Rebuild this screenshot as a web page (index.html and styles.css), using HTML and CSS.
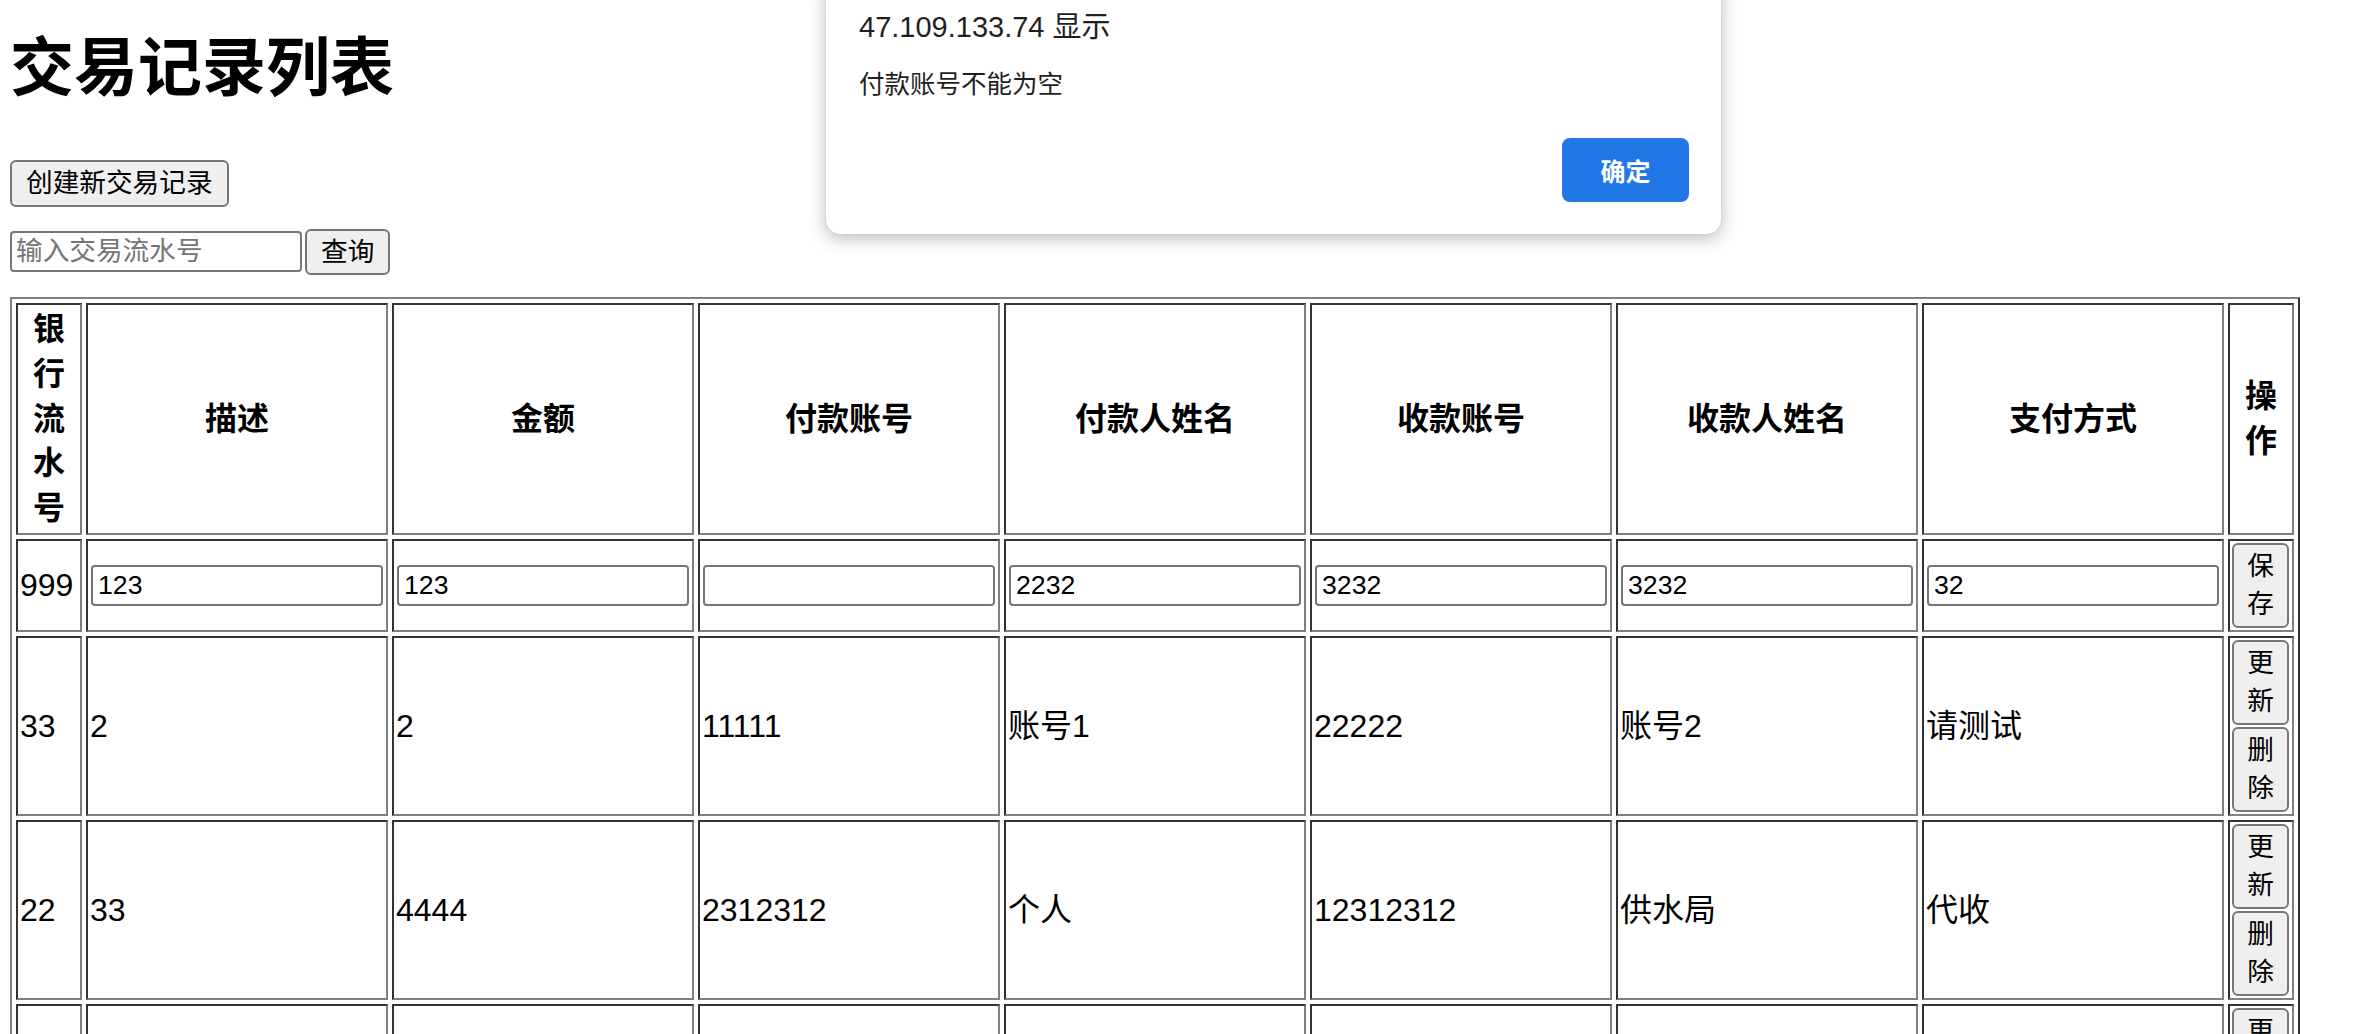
FILE: index.html
```html
<!DOCTYPE html>
<html lang="zh-CN">
<head>
<meta charset="utf-8">
<title>交易记录列表</title>
<link rel="stylesheet" href="styles.css">
</head>
<body>
<div class="page">
  <h1 class="title">交易记录列表</h1>
  <button class="btn btn-create">创建新交易记录</button>
  <div class="search">
    <input class="search-input" type="text" placeholder="输入交易流水号">
    <button class="btn btn-search">查询</button>
  </div>
  <table class="records">
    <thead>
      <tr>
        <th class="c-narrow">银行流水号</th>
        <th class="c-wide">描述</th>
        <th class="c-wide">金额</th>
        <th class="c-wide">付款账号</th>
        <th class="c-wide">付款人姓名</th>
        <th class="c-wide">收款账号</th>
        <th class="c-wide">收款人姓名</th>
        <th class="c-wide">支付方式</th>
        <th class="c-narrow">操作</th>
      </tr>
    </thead>
    <tbody>
      <tr>
        <td>999</td>
        <td><input class="cell-input" type="text" value="123"></td>
        <td><input class="cell-input" type="text" value="123"></td>
        <td><input class="cell-input" type="text" value=""></td>
        <td><input class="cell-input" type="text" value="2232"></td>
        <td><input class="cell-input" type="text" value="3232"></td>
        <td><input class="cell-input" type="text" value="3232"></td>
        <td><input class="cell-input" type="text" value="32"></td>
        <td class="ops"><button class="btn btn-op">保存</button></td>
      </tr>
      <tr>
        <td>33</td>
        <td>2</td>
        <td>2</td>
        <td>11111</td>
        <td>账号1</td>
        <td>22222</td>
        <td>账号2</td>
        <td>请测试</td>
        <td class="ops"><button class="btn btn-op">更新</button><button class="btn btn-op">删除</button></td>
      </tr>
      <tr>
        <td>22</td>
        <td>33</td>
        <td>4444</td>
        <td>2312312</td>
        <td>个人</td>
        <td>12312312</td>
        <td>供水局</td>
        <td>代收</td>
        <td class="ops"><button class="btn btn-op">更新</button><button class="btn btn-op">删除</button></td>
      </tr>
      <tr>
        <td></td>
        <td></td>
        <td></td>
        <td></td>
        <td></td>
        <td></td>
        <td></td>
        <td></td>
        <td class="ops"><button class="btn btn-op">更新</button><button class="btn btn-op">删除</button></td>
      </tr>
    </tbody>
  </table>
</div>

<div class="dialog" role="alertdialog">
  <div class="dialog-title">47.109.133.74 显示</div>
  <div class="dialog-msg">付款账号不能为空</div>
  <div class="dialog-actions">
    <button class="dialog-ok">确定</button>
  </div>
</div>
</body>
</html>
```

FILE: styles.css
```css
html, body {
  margin: 0;
  padding: 0;
  background: #ffffff;
}

body {
  font-family: "Liberation Sans", "Noto Sans CJK SC", sans-serif;
  font-size: 32px;
  color: #000;
  position: relative;
  overflow: hidden;
  height: 1034px;
}

.page {
  display: flex;
  flex-direction: column;
  align-items: flex-start;
  padding: 0 10px;
}

.title {
  font-size: 64px;
  font-weight: bold;
  line-height: 64px;
  margin: 36px 0 60px;
}

.btn {
  font-family: "Liberation Sans", "Noto Sans CJK SC", sans-serif;
  font-size: 26.67px;
  line-height: 38.5px;
  color: #000;
  background: #efefef;
  border: 2px solid #767676;
  border-radius: 6px;
  padding: 2px 13px;
  margin: 0;
}

.btn-create {
  margin-bottom: 22px;
  padding: 2px 14px;
}

.search {
  display: flex;
  align-items: center;
  gap: 3px;
  margin-bottom: 22px;
}

.search-input {
  box-sizing: border-box;
  width: 292px;
  height: 41px;
  font-family: "Liberation Sans", "Noto Sans CJK SC", sans-serif;
  font-size: 26.67px;
  padding: 2px 4px;
  border: 2px solid #767676;
  border-radius: 4px;
  margin: 0;
}

.search-input::placeholder {
  color: #757575;
}

.btn-search {
  padding: 2px 14px;
}

.records {
  table-layout: fixed;
  width: 2290px;
  border-collapse: separate;
  border-spacing: 4px;
  border: 2px solid;
  border-color: #808080 #333333 #333333 #808080;
}

.records th,
.records td {
  box-sizing: border-box;
  border: 2px solid;
  border-color: #333333 #808080 #808080 #333333;
  padding: 2px;
  vertical-align: middle;
  line-height: 44.8px;
}

.records th {
  font-weight: bold;
  text-align: center;
}

.records td {
  text-align: left;
}

.c-narrow {
  width: 66px;
}

.c-wide {
  width: 302px;
}

.cell-input {
  box-sizing: border-box;
  display: block;
  width: 292px;
  height: 41px;
  margin: 0 0 0 1px;
  font-family: "Liberation Sans", "Noto Sans CJK SC", sans-serif;
  font-size: 26.67px;
  padding: 2px 5px;
  border: 2px solid #767676;
  border-radius: 4px;
  color: #000;
}

.ops {
  line-height: 0;
}

.btn-op {
  display: block;
  width: 57px;
  padding: 2px 12px;
  box-sizing: border-box;
}

.btn-op + .btn-op {
  margin-top: 2px;
}

.dialog {
  position: absolute;
  left: 826px;
  top: -20px;
  width: 895px;
  height: 254px;
  box-sizing: border-box;
  background: #ffffff;
  border-radius: 14px;
  box-shadow: 0 4px 18px rgba(0, 0, 0, 0.28), 0 0 1px rgba(0, 0, 0, 0.3);
  padding: 29px 32px 32px 33px;
  display: flex;
  flex-direction: column;
  font-family: "Liberation Sans", "Noto Sans CJK SC", sans-serif;
  color: #1f1f1f;
}

.dialog-title {
  font-size: 29px;
  line-height: 36px;
}

.dialog-msg {
  font-size: 25.5px;
  line-height: 32px;
  margin-top: 23px;
}

.dialog-actions {
  margin-top: auto;
  display: flex;
  justify-content: flex-end;
}

.dialog-ok {
  width: 127px;
  height: 64px;
  border: none;
  border-radius: 8px;
  background: #2277e6;
  color: #ffffff;
  font-family: "Liberation Sans", "Noto Sans CJK SC", sans-serif;
  font-size: 25px;
  font-weight: bold;
}
```
